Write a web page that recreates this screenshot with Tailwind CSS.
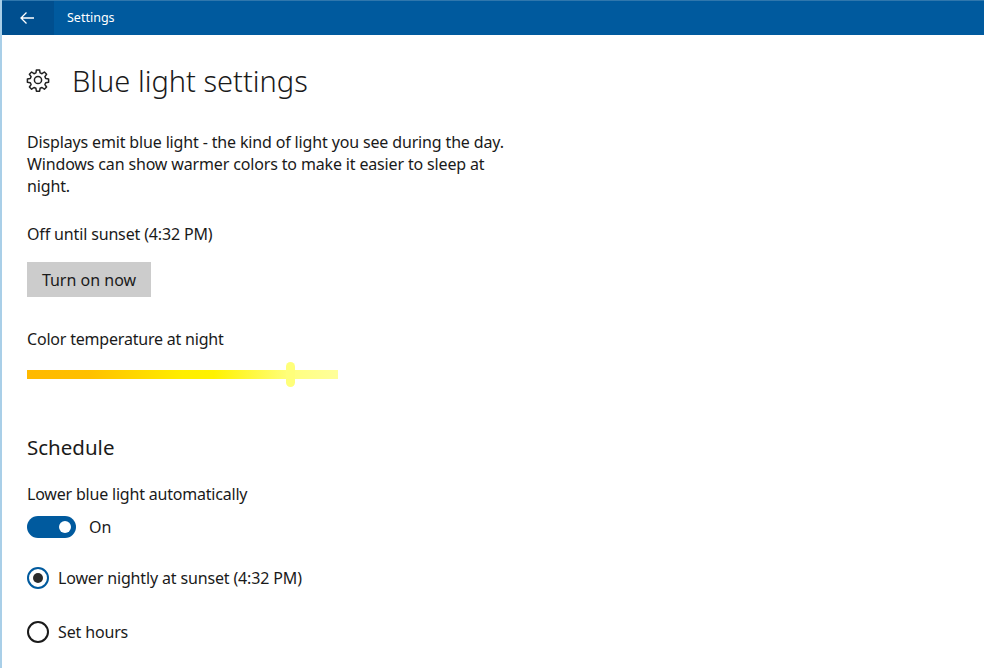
<!DOCTYPE html>
<html lang="en">

<head>
  <meta charset="UTF-8">
  <meta name="viewport" content="width=device-width, initial-scale=1.0">
  <script src="https://cdn.jsdelivr.net/npm/@tailwindcss/browser@4"></script>
  <title>Settings</title>
</head>

<body class="bg-white h-screen overflow-hidden font-['Noto_Sans',sans-serif] text-[#1a1a1a] border-l-2 border-[#a9cfe8]">
  <!-- title bar -->
  <div class="-ml-[2px] h-[35px] bg-[#005a9e] border-t border-[#2f77ad] flex items-center text-white">
    <div class="w-[54px] h-full bg-[#004f8f] flex items-center justify-center">
      <svg width="16" height="14" viewBox="0 0 16 14" fill="none" stroke="#fff" stroke-width="1.3">
        <path d="M15 7H2M7.5 1.5L2 7l5.5 5.5" />
      </svg>
    </div>
    <span class="ml-[13px] pt-[1px] text-[12.5px]">Settings</span>
  </div>

  <div class="pl-[25px]">
    <!-- heading -->
    <div class="flex items-center h-[44px] mt-[23px]">
      <svg width="24" height="24" viewBox="0 0 24 24" fill="none" stroke="#222" stroke-width="1.5" stroke-linejoin="round" class="ml-[-1px]">
        <circle cx="12" cy="12" r="3.6" />
        <path d="M10.4 2h3.2l.5 2.9 1.9.8 2.4-1.7 2.2 2.2-1.7 2.4.8 1.9 2.9.5v3.2l-2.9.5-.8 1.9 1.7 2.4-2.2 2.2-2.4-1.7-1.9.8-.5 2.9h-3.2l-.5-2.9-1.9-.8-2.4 1.7-2.2-2.2 1.7-2.4-.8-1.9-2.9-.5v-3.2l2.9-.5.8-1.9-1.7-2.4 2.2-2.2 2.4 1.7 1.9-.8z" />
      </svg>
      <h1 class="ml-[22px] text-[29px] font-light leading-none">Blue light settings</h1>
    </div>

    <p class="mt-[29px] w-[500px] text-[16px] leading-[22px] tracking-[-0.15px]">Displays emit blue light - the kind of light you see during the day. Windows can show warmer colors to make it easier to sleep at night.</p>

    <p class="mt-[26px] text-[16px] leading-[22px] tracking-[-0.15px]">Off until sunset (4:32 PM)</p>

    <button class="block mt-[17px] w-[124px] h-[35px] bg-[#cccccc] text-[16px] text-center">Turn on now</button>

    <p class="mt-[31px] text-[16px] leading-[22px] tracking-[-0.2px]">Color temperature at night</p>

    <!-- slider -->
    <div class="relative mt-[20px] w-[311px] h-[9px] bg-[linear-gradient(to_right,#ffb900_0%,#ffc000_20%,#ffee00_50%,#fff200_60%,#ffff80_85%,#ffff9a_100%)]">
      <div class="absolute left-[259px] top-[-8px] w-[9px] h-[25px] rounded-full bg-[#ffff7a]"></div>
    </div>

    <h2 class="mt-[54px] text-[20.5px] leading-[28px]">Schedule</h2>

    <p class="mt-[22px] text-[16px] leading-[22px] tracking-[-0.2px]">Lower blue light automatically</p>

    <!-- toggle -->
    <div class="flex items-center mt-[10px] h-[24px]">
      <div class="w-[49px] h-[22px] rounded-full bg-[#005a9e] flex items-center justify-end pr-[5px]">
        <div class="w-[12px] h-[12px] rounded-full bg-white"></div>
      </div>
      <span class="ml-[13px] text-[16px]">On</span>
    </div>

    <!-- radios -->
    <div class="flex items-center mt-[27px] h-[24px]">
      <div class="w-[22px] h-[22px] rounded-full border-2 border-[#005a9e] flex items-center justify-center">
        <div class="w-[10px] h-[10px] rounded-full bg-[#2b2b2b]"></div>
      </div>
      <span class="ml-[9px] text-[16px] tracking-[-0.15px]">Lower nightly at sunset (4:32 PM)</span>
    </div>
    <div class="flex items-center mt-[30px] h-[24px]">
      <div class="w-[22px] h-[22px] rounded-full border-2 border-[#1a1a1a]"></div>
      <span class="ml-[9px] text-[16px] tracking-[-0.15px]">Set hours</span>
    </div>
  </div>
</body>

</html>
